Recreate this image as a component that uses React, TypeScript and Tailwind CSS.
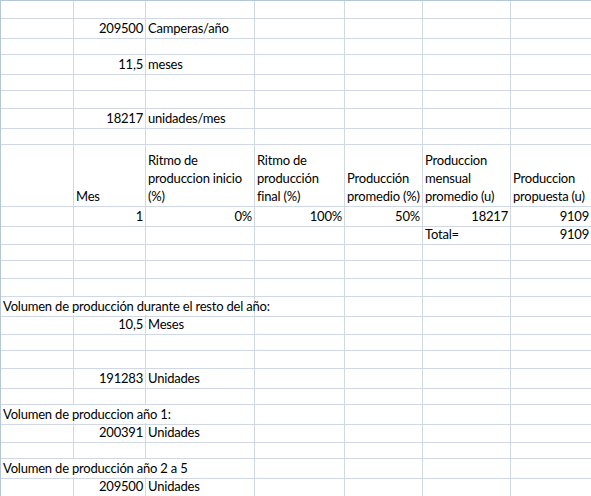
import React from 'react'

type Cell = { text?: React.ReactNode; align?: 'l' | 'r'; span?: number }
type Row = { h: 'n' | 'head'; cells?: Record<number, Cell> }

const cols = 'grid grid-cols-[73px_72px_109px_90px_78px_88px_81px]'

const rows: Row[] = [
  { h: 'n' },
  { h: 'n', cells: { 1: { text: '209500', align: 'r' }, 2: { text: 'Camperas/año' } } },
  { h: 'n' },
  { h: 'n', cells: { 1: { text: '11,5', align: 'r' }, 2: { text: 'meses' } } },
  { h: 'n' },
  { h: 'n' },
  { h: 'n', cells: { 1: { text: '18217', align: 'r' }, 2: { text: 'unidades/mes' } } },
  { h: 'n' },
  {
    h: 'head',
    cells: {
      1: { text: 'Mes' },
      2: { text: <>Ritmo de<br />produccion inicio<br />(%)</> },
      3: { text: <>Ritmo de<br />producción<br />final (%)</> },
      4: { text: <>Producción<br />promedio (%)</> },
      5: { text: <>Produccion<br />mensual<br />promedio (u)</> },
      6: { text: <>Produccion<br />propuesta (u)</> },
    },
  },
  {
    h: 'n',
    cells: {
      1: { text: '1', align: 'r' },
      2: { text: '0%', align: 'r' },
      3: { text: '100%', align: 'r' },
      4: { text: '50%', align: 'r' },
      5: { text: '18217', align: 'r' },
      6: { text: '9109', align: 'r' },
    },
  },
  { h: 'n', cells: { 5: { text: 'Total=' }, 6: { text: '9109', align: 'r' } } },
  { h: 'n' },
  { h: 'n' },
  { h: 'n' },
  { h: 'n', cells: { 0: { text: 'Volumen de producción durante el resto del año:', span: 3 } } },
  { h: 'n', cells: { 1: { text: '10,5', align: 'r' }, 2: { text: 'Meses' } } },
  { h: 'n' },
  { h: 'n' },
  { h: 'n', cells: { 1: { text: '191283', align: 'r' }, 2: { text: 'Unidades' } } },
  { h: 'n' },
  { h: 'n', cells: { 0: { text: 'Volumen de produccion año 1:', span: 3 } } },
  { h: 'n', cells: { 1: { text: '200391', align: 'r' }, 2: { text: 'Unidades' } } },
  { h: 'n' },
  { h: 'n', cells: { 0: { text: 'Volumen de producción año 2 a 5', span: 3 } } },
  { h: 'n', cells: { 1: { text: '209500', align: 'r' }, 2: { text: 'Unidades' } } },
  { h: 'n' },
]

function SheetRow({ row }: { row: Row }) {
  const out: React.ReactNode[] = []
  for (let i = 0; i < 7; i++) {
    const c = row.cells?.[i]
    const span = c?.span ?? 1
    out.push(
      <div
        key={i}
        className={`flex items-end border-r border-b border-[#d0d7e5] px-[2px] pb-[1px] overflow-visible whitespace-nowrap ${
          span === 3 ? 'col-span-3' : ''
        } ${c?.align === 'r' ? 'justify-end' : 'justify-start'}`}
      >
        {c?.text && <span className="leading-[18px]">{c.text}</span>}
      </div>
    )
    i += span - 1
  }
  return <div className={`${cols} ${row.h === 'head' ? 'h-[62px]' : 'h-[18px]'}`}>{out}</div>
}

export default function App() {
  return (
    <div className="w-[591px] h-[496px] overflow-hidden bg-white">
      <div
        className="border-l border-t border-[#b6c6da] text-[13px] tracking-[-0.2px] text-black w-max"
        style={{ fontFamily: 'Lato, "Liberation Sans", sans-serif' }}
      >
        {rows.map((r, i) => (
          <SheetRow key={i} row={r} />
        ))}
      </div>
    </div>
  )
}
